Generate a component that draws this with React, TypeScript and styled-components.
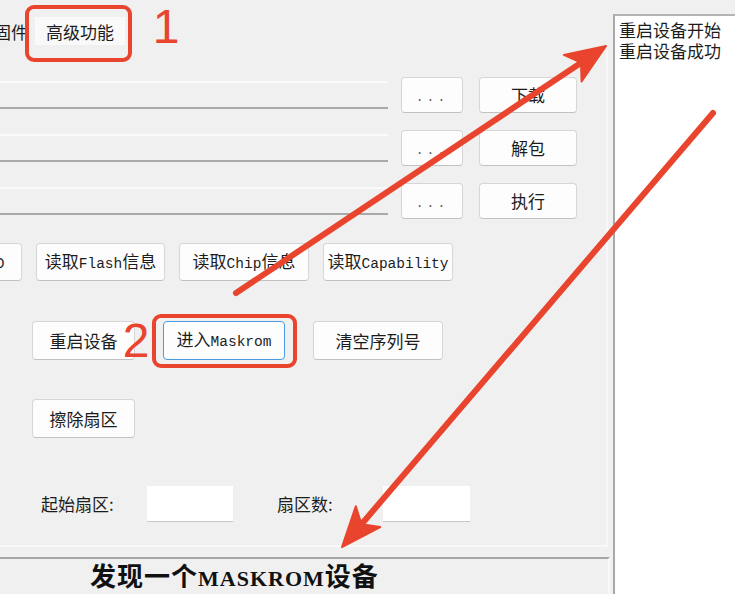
import styled, { createGlobalStyle } from 'styled-components';

const GlobalStyle = createGlobalStyle`
  html, body {
    margin: 0;
    padding: 0;
    background: #f0f0f0;
    overflow: hidden;
  }
`;

const RED = '#e9442e';

const Window = styled.div`
  position: relative;
  display: flex;
  width: 735px;
  height: 594px;
  overflow: hidden;
  background: #f0f0f0;
  font-family: "Noto Sans CJK SC", sans-serif;
  color: #1c1c1c;
`;

const LeftPane = styled.div`
  flex: 0 0 610px;
  display: flex;
  flex-direction: column;
  overflow: hidden;
`;

const TabStrip = styled.div`
  height: 50px;
  box-sizing: border-box;
  padding-top: 17px;
  display: flex;
  align-items: flex-start;
  gap: 7px;
`;

const Tab = styled.div<{ $active?: boolean }>`
  height: 28px;
  display: flex;
  align-items: center;
  justify-content: center;
  font-size: 17px;
  line-height: 1;
  ${({ $active }) =>
    $active
      ? `
    width: 90px;
    background: #f9f9f9;
  `
      : `
    margin-left: -6px;
  `}
`;

const TabPage = styled.div`
  height: 502px;
  box-sizing: border-box;
  margin-right: 2px;
  padding-top: 27px;
  border-right: 2px solid #f8f8f8;
  border-bottom: 2px solid #f8f8f8;
  display: flex;
  flex-direction: column;
`;

const Row = styled.div<{ $top?: number; $left?: number; $gap?: number }>`
  display: flex;
  align-items: center;
  margin-top: ${({ $top }) => $top ?? 0}px;
  padding-left: ${({ $left }) => $left ?? 0}px;
  gap: ${({ $gap }) => $gap ?? 0}px;
`;

const FileRows = styled.div`
  display: flex;
  flex-direction: column;
  gap: 17px;
`;

const PathBox = styled.div`
  width: 408px;
  height: 28px;
  margin-left: -20px;
  margin-right: 13px;
  box-sizing: border-box;
  border-top: 2px solid #fafafa;
  border-bottom: 2px solid #a9a9a9;
  background: #f0f0f0;
`;

const Button = styled.button<{ $w: number; $h?: number; $focus?: boolean; $shift?: number }>`
  flex: 0 0 auto;
  width: ${({ $w }) => $w}px;
  height: ${({ $h }) => $h ?? 36}px;
  margin-left: ${({ $shift }) => $shift ?? 0}px;
  box-sizing: border-box;
  padding: 0;
  background: #fdfdfd;
  border: 1px solid ${({ $focus }) => ($focus ? '#4b9be0' : '#d6d6d6')};
  border-bottom-color: ${({ $focus }) => ($focus ? '#4b9be0' : '#c2c2c2')};
  border-radius: 4px;
  font-family: "Noto Sans CJK SC", sans-serif;
  font-size: 17px;
  line-height: 1;
  color: #1c1c1c;
  white-space: nowrap;
  overflow: hidden;
`;

const Dots = styled.span`
  font-family: "Liberation Mono", monospace;
  font-size: 13px;
  letter-spacing: 3px;
  color: #555;
`;

const Lat = styled.span`
  font-family: "Liberation Mono", monospace;
  font-size: 14.5px;
`;

const FieldLabel = styled.span`
  width: 106px;
  font-size: 17px;
  line-height: 1;
`;

const NumberBox = styled.div<{ $w: number }>`
  width: ${({ $w }) => $w}px;
  height: 36px;
  box-sizing: border-box;
  background: #ffffff;
  border-bottom: 1px solid #c8c8c8;
`;

const Spacer = styled.div<{ $w: number }>`
  width: ${({ $w }) => $w}px;
`;

const StatusBar = styled.div`
  flex: 1;
  margin-top: 10px;
  margin-right: 0;
  border-top: 2px solid #a6a6a6;
  border-right: 2px solid #f8f8f8;
  padding: 1px 0 0 90px;
  font-size: 26px;
  font-weight: 700;
  line-height: 30px;
  letter-spacing: 1px;
  color: #111;
  white-space: nowrap;
`;

const SerifLat = styled.span`
  font-family: "Liberation Serif", serif;
  font-size: 22px;
  font-weight: 700;
`;

const LogList = styled.div`
  flex: 1;
  margin: 14px 0 0 3px;
  padding: 3px 0 0 4px;
  background: #ffffff;
  border-top: 2px solid #b4b4b4;
  border-left: 2px solid #a8a8a8;
  font-size: 17px;
  line-height: 21px;
  color: #1c1c1c;
  white-space: nowrap;
`;

const Overlay = styled.svg`
  position: absolute;
  left: 0;
  top: 0;
  pointer-events: none;
`;

const Mark = styled.text`
  font-family: "Liberation Sans", sans-serif;
  font-size: 48px;
  fill: ${RED};
`;

function arrow(x1: number, y1: number, x2: number, y2: number) {
  const dx = x2 - x1;
  const dy = y2 - y1;
  const len = Math.hypot(dx, dy);
  const ux = dx / len;
  const uy = dy / len;
  const nx = -uy;
  const ny = ux;
  const L = 40;
  const W = 16;
  const notch = 10;
  const bx = x2 - ux * L;
  const by = y2 - uy * L;
  const head = [
    [x2, y2],
    [bx + nx * W, by + ny * W],
    [x2 - ux * (L - notch), y2 - uy * (L - notch)],
    [bx - nx * W, by - ny * W],
  ]
    .map((p) => p.map((v) => v.toFixed(1)).join(','))
    .join(' ');
  const sx = x2 - ux * (L - notch);
  const sy = y2 - uy * (L - notch);
  return { shaft: { x1, y1, x2: sx, y2: sy }, head };
}

const arrows = [arrow(236, 293, 606, 46), arrow(713, 113, 342, 547)];

export default function App() {
  return (
    <Window>
      <GlobalStyle />
      <LeftPane>
        <TabStrip>
          <Tab>固件</Tab>
          <Tab $active>高级功能</Tab>
        </TabStrip>

        <TabPage>
          <FileRows>
            {['下载', '解包', '执行'].map((label) => (
              <Row key={label}>
                <PathBox />
                <Button $w={62} style={{ marginRight: 16 }}>
                  <Dots>...</Dots>
                </Button>
                <Button $w={98}>{label}</Button>
              </Row>
            ))}
          </FileRows>

          <Row $top={24} $gap={14}>
            <Button $w={130} $h={38} $shift={-108}>
              读取<Lat>FlashID</Lat>
            </Button>
            <Button $w={129} $h={38}>
              读取<Lat>Flash</Lat>信息
            </Button>
            <Button $w={130} $h={38}>
              读取<Lat>Chip</Lat>信息
            </Button>
            <Button $w={130} $h={38}>
              读取<Lat>Capability</Lat>
            </Button>
          </Row>

          <Row $top={40} $left={32} $gap={28}>
            <Button $w={103} $h={39}>重启设备</Button>
            <Button $w={122} $h={39} $focus>
              进入<Lat>Maskrom</Lat>
            </Button>
            <Button $w={130} $h={39}>清空序列号</Button>
          </Row>

          <Row $top={39} $left={32}>
            <Button $w={103} $h={39}>擦除扇区</Button>
          </Row>

          <Row $top={48} $left={41}>
            <FieldLabel>起始扇区:</FieldLabel>
            <NumberBox $w={86} />
            <Spacer $w={44} />
            <FieldLabel>扇区数:</FieldLabel>
            <NumberBox $w={87} />
          </Row>
        </TabPage>

        <StatusBar>
          发现一个<SerifLat>MASKROM</SerifLat>设备
        </StatusBar>
      </LeftPane>

      <LogList>
        <div>重启设备开始</div>
        <div>重启设备成功</div>
      </LogList>

      <Overlay width={735} height={594} viewBox="0 0 735 594">
        <rect x={27} y={7} width={103} height={53} rx={7} fill="none" stroke={RED} strokeWidth={4} />
        <rect x={154} y={316} width={141} height={50} rx={7} fill="none" stroke={RED} strokeWidth={4} />
        <Mark x={166} y={43} textAnchor="middle">1</Mark>
        <Mark x={136} y={357} textAnchor="middle">2</Mark>
        {arrows.map((a, i) => (
          <g key={i}>
            <line {...a.shaft} stroke={RED} strokeWidth={6} strokeLinecap="round" />
            <polygon points={a.head} fill={RED} strokeLinejoin="round" stroke={RED} strokeWidth={2} />
          </g>
        ))}
      </Overlay>
    </Window>
  );
}
